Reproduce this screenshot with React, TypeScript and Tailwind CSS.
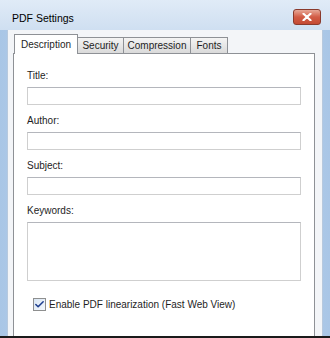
import { Check } from 'lucide-react'

// Fenêtre de dialogue style Windows 7 : "PDF Settings", onglet Description.
const tabs = [
  { label: 'Description', w: 'w-[64px]' },
  { label: 'Security', w: 'w-[46px]' },
  { label: 'Compression', w: 'w-[67px]' },
  { label: 'Fonts', w: 'w-[37px]' },
]

function Field({ label, tall }: { label: string; tall?: boolean }) {
  return (
    <div className="flex flex-col">
      <div className="h-[16px] flex items-center">{label}</div>
      <div
        className={
          'mt-[4px] border border-[#cfcfcf] border-t-[#b4b6bc] bg-white ' + (tall ? 'h-[59px]' : 'h-[18px]')
        }
      />
    </div>
  )
}

export default function App() {
  return (
    <div
      className="w-[330px] h-[338px] overflow-hidden flex flex-col bg-gradient-to-r from-[#a9c6e6] via-[#d3e3f3] to-[#a9c6e6] border-b-2 border-b-[#1a1a1a] text-[10px] text-[#1e1e1e]"
      style={{ fontFamily: '"Liberation Sans", Arial, sans-serif' }}
    >
      {/* barre de titre */}
      <div className="h-[30px] shrink-0 flex items-start justify-between pl-[12px] pr-[9px] bg-gradient-to-b from-[#e0ebf7] to-[#cfdff1]">
        <span className="text-[10.5px] text-black mt-[11px]">PDF Settings</span>
        <div className="w-[28px] h-[16px] mt-[9px] rounded-[3px] border border-[#8a3a2c] bg-gradient-to-b from-[#e6a898] via-[#d25c46] to-[#c44a33] flex items-center justify-center">
          <svg width="10" height="8" viewBox="0 0 10 8">
            <path d="M1.5 0.8 L8.5 7.2 M8.5 0.8 L1.5 7.2" stroke="#fff" strokeWidth="2.2" strokeLinecap="round" />
          </svg>
        </div>
      </div>

      {/* zone cliente */}
      <div className="mx-[7px] flex-1 bg-[#f3f5f8] border-x border-[#b7c9de] pt-[4px] pl-[5px] pr-[7px] flex flex-col">
        <div className="flex items-end h-[19px] pl-[1px]">
          {tabs.map((t, i) =>
            i === 0 ? (
              <div
                key={t.label}
                className={t.w + ' h-[20px] flex items-center justify-center bg-white border border-b-0 border-[#8e9196] -mb-[1px] relative z-10'}
              >
                {t.label}
              </div>
            ) : (
              <div
                key={t.label}
                className={t.w + ' h-[16px] flex items-center justify-center bg-gradient-to-b from-[#f4f4f4] to-[#dadada] border border-[#8e9196] border-l-0 border-b-0'}
              >
                {t.label}
              </div>
            )
          )}
        </div>
        <div className="flex-1 bg-white border border-b-0 border-[#8e9196] px-[13px] pt-[13px]">
          <div className="flex flex-col gap-[7px]">
            <Field label="Title:" />
            <Field label="Author:" />
            <Field label="Subject:" />
            <Field label="Keywords:" tall />
          </div>
          <div className="flex items-center gap-[3px] mt-[16px] pl-[6px]">
            <div className="w-[13px] h-[13px] border border-[#8e8f8f] bg-gradient-to-br from-[#d9e6f4] to-[#f4f8fc] flex items-center justify-center">
              <Check size={11} strokeWidth={3.4} color="#1f3f8f" />
            </div>
            <span>Enable PDF linearization (Fast Web View)</span>
          </div>
        </div>
      </div>
    </div>
  )
}
